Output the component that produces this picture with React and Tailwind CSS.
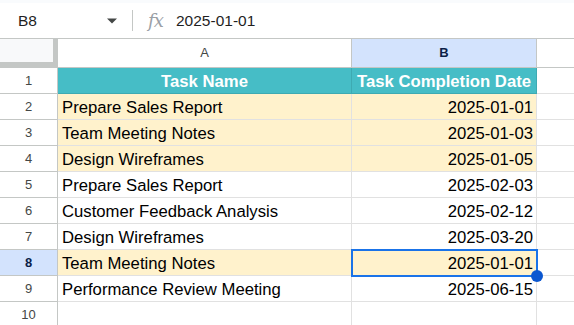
import React from 'react';

const rows = [
  { task: 'Prepare Sales Report', date: '2025-01-01', hl: true },
  { task: 'Team Meeting Notes', date: '2025-01-03', hl: true },
  { task: 'Design Wireframes', date: '2025-01-05', hl: true },
  { task: 'Prepare Sales Report', date: '2025-02-03' },
  { task: 'Customer Feedback Analysis', date: '2025-02-12' },
  { task: 'Design Wireframes', date: '2025-03-20' },
  { task: 'Team Meeting Notes', date: '2025-01-01', hl: true, selected: true },
  { task: 'Performance Review Meeting', date: '2025-06-15' },
];

const App = () => {
  return (
    <div className="w-[574px] h-[325px] overflow-hidden bg-white font-['Liberation_Sans',Arial,sans-serif] text-black">
      {/* formula bar */}
      <div className="h-[3px] bg-[#f9fbfd]" />
      <div className="h-[36px] flex items-center border-b border-[#c4c7c5]">
        <div className="w-[132px] flex items-center pl-[18px] pr-4 text-[15.5px] text-[#1f1f1f]">
          <span className="flex-1">B8</span>
          <svg width="10" height="6" viewBox="0 0 10 5" className="mr-[-1px]">
            <path d="M0 0 L10 0 L5 5 Z" fill="#444746" />
          </svg>
        </div>
        <div className="w-px h-[21px] bg-[#c4c7c5]" />
        <span className="ml-[15px] w-[18px] text-[18px] italic font-['DejaVu_Serif',serif] text-[#9aa0a6] tracking-[-1px]">fx</span>
        <span className="ml-[10px] text-[15.5px] text-[#1f1f1f]">2025-01-01</span>
      </div>

      {/* column headers */}
      <div className="flex h-[29px] border-b border-[#c4c7c5]">
        <div className="w-[58px] h-full bg-[#f8f9fa] border-r-[5px] border-b-[5px] border-[#c4c7c5]" />
        <div className="w-[294px] flex items-center justify-center border-r border-[#c4c7c5] text-[13px] text-[#444746]">A</div>
        <div className="w-[185px] flex items-center justify-center border-r border-[#c4c7c5] bg-[#d3e3fd] text-[13px] font-bold text-[#0b1f48]">B</div>
        <div className="flex-1" />
      </div>

      {/* row 1 header */}
      <div className="flex h-[26px]">
        <div className="w-[58px] flex items-center justify-center border-r border-b border-[#c4c7c5] text-[13px] text-[#444746]">1</div>
        <div className="w-[294px] flex items-center justify-center pt-[2px] bg-[#46bdc6] border-r border-b border-[#3eaab2] text-white font-bold text-[16.7px]">Task Name</div>
        <div className="w-[185px] flex items-center justify-center pt-[2px] bg-[#46bdc6] border-r border-b border-[#3eaab2] text-white font-bold text-[16.7px] whitespace-nowrap">Task Completion Date</div>
        <div className="flex-1 border-b border-[#e1e1e1]" />
      </div>

      {rows.map((r, i) => (
        <div key={i} className="flex h-[26px]">
          <div
            className={`w-[58px] flex items-center justify-center border-r border-b border-[#c4c7c5] text-[13px] ${
              r.selected ? 'bg-[#d3e3fd] font-bold text-[#0b1f48]' : 'text-[#444746]'
            }`}
          >
            {i + 2}
          </div>
          <div className={`w-[294px] flex items-center pl-1 pt-[3px] border-r border-b border-[#e1e1e1] text-[16.7px] whitespace-nowrap ${r.hl ? 'bg-[#fff2cc]' : ''}`}>
            {r.task}
          </div>
          <div className={`relative w-[185px] flex items-center justify-end pr-[3px] pt-[3px] border-r border-b border-[#e1e1e1] text-[16.7px] ${r.hl ? 'bg-[#fff2cc]' : ''}`}>
            {r.date}
            {r.selected && (
              <>
                <div className="absolute z-10 left-[-1px] top-[-1px] right-[-2px] bottom-[-2px] border-2 border-[#1a73e8]" />
                <div className="absolute z-20 right-[-7px] bottom-[-7px] w-[12px] h-[12px] rounded-full bg-[#0b57d0]" />
              </>
            )}
          </div>
          <div className="flex-1 border-b border-[#e1e1e1]" />
        </div>
      ))}

      <div className="flex h-[26px]">
        <div className="w-[58px] flex items-center justify-center border-r border-b border-[#c4c7c5] text-[13px] text-[#444746]">10</div>
        <div className="w-[294px] border-r border-b border-[#e1e1e1]" />
        <div className="w-[185px] border-r border-b border-[#e1e1e1]" />
        <div className="flex-1 border-b border-[#e1e1e1]" />
      </div>
    </div>
  );
};

export default App;
